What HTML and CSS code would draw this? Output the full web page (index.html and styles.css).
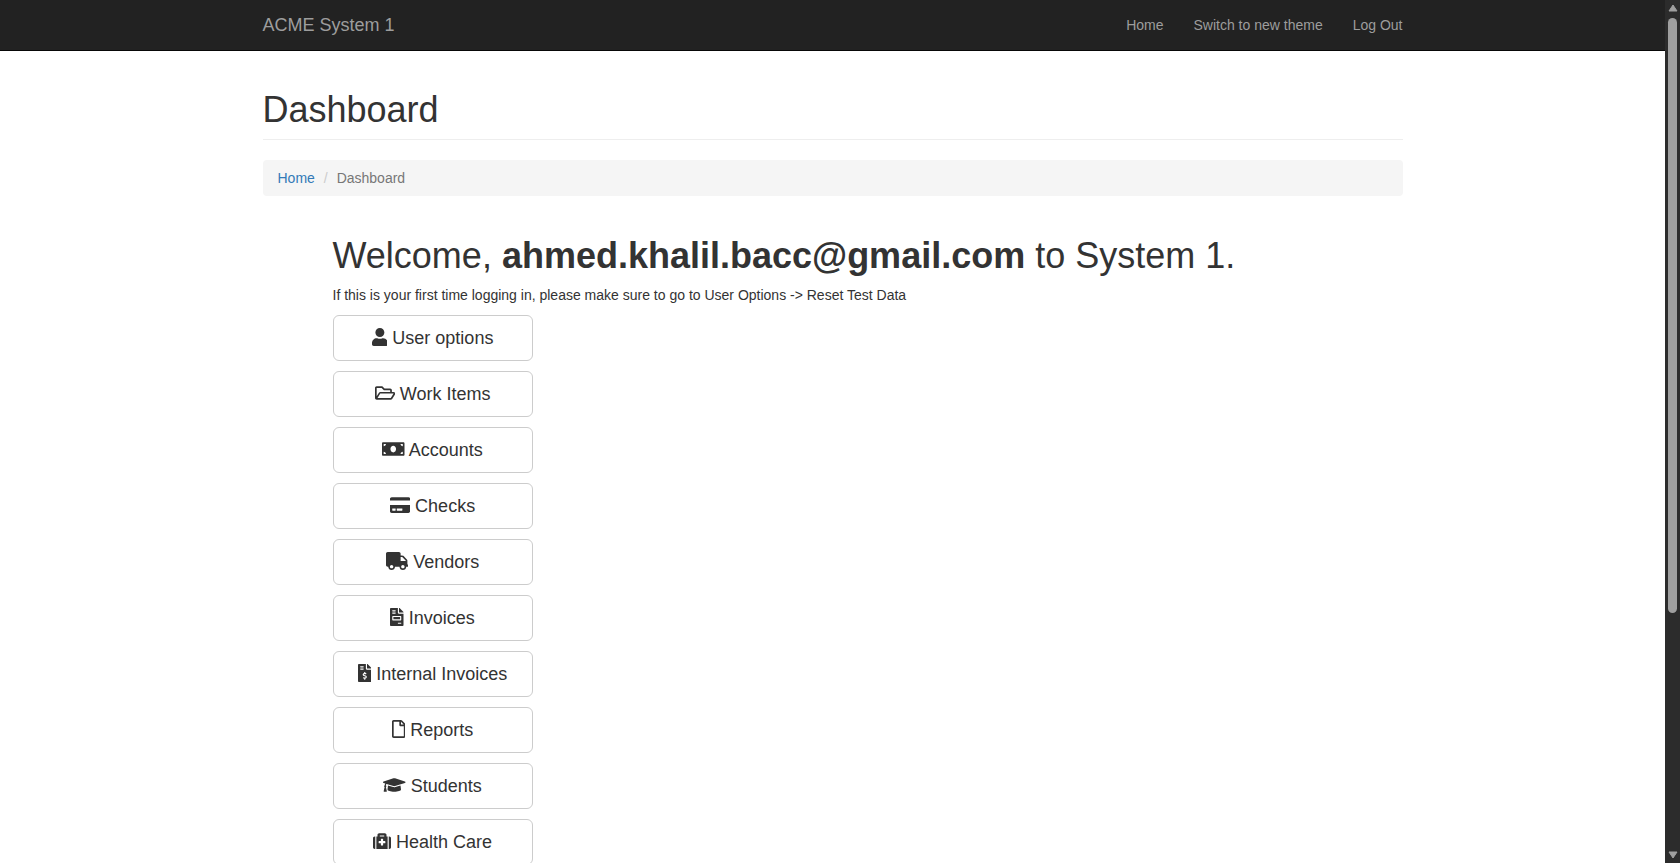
FILE: index.html
```html
<!DOCTYPE html>
<html lang="en">
<head>
<meta charset="utf-8">
<meta name="viewport" content="width=device-width, initial-scale=1">
<title>ACME System 1 - Dashboard</title>
<link rel="stylesheet" href="styles.css">
</head>
<body>
<div class="shell">
  <div class="page">
    <header class="navbar">
      <div class="container navbar-inner">
        <a class="brand" href="#">ACME System 1</a>
        <nav class="nav">
          <a href="#">Home</a>
          <a href="#">Switch to new theme</a>
          <a href="#">Log Out</a>
        </nav>
      </div>
    </header>
    <main class="container">
      <div class="page-header">
        <h1>Dashboard</h1>
      </div>
      <ol class="breadcrumb">
        <li><a href="#">Home</a></li>
        <li class="active">Dashboard</li>
      </ol>
      <section class="welcome">
        <h1>Welcome, <strong>ahmed.khalil.bacc@gmail.com</strong> to System 1.</h1>
        <p>If this is your first time logging in, please make sure to go to User Options -&gt; Reset Test Data</p>
        <div class="menu">
          <button type="button" class="btn"><svg class="icon" viewBox="0 0 448 512" aria-hidden="true"><path d="M224 256c70.700 0 128-57.300 128-128S294.700 0 224 0 96 57.300 96 128s57.300 128 128 128zm89.600 32h-16.700c-22.200 10.200-46.900 16-72.900 16s-50.600-5.800-72.900-16h-16.700C60.200 288 0 348.200 0 422.400V464c0 26.500 21.500 48 48 48h352c26.500 0 48-21.500 48-48v-41.600c0-74.200-60.200-134.400-134.400-134.400z"/></svg> User options</button>
          <button type="button" class="btn"><svg class="icon" viewBox="0 0 576 512" aria-hidden="true"><path d="M527.900 224H480v-48c0-26.500-21.500-48-48-48H272l-64-64H48C21.500 64 0 85.500 0 112v288c0 26.500 21.500 48 48 48h400c16.500 0 31.900-8.500 40.700-22.600l79.900-128c20-31.900-3-73.400-40.700-73.400zM48 118c0-3.300 2.700-6 6-6h134.100l64 64H426c3.300 0 6 2.700 6 6v42H152c-16.800 0-32.400 8.800-41.100 23.200L48 351.400zm400 282H72l77.200-128H528z"/></svg> Work Items</button>
          <button type="button" class="btn"><svg class="icon" viewBox="0 0 640 512" aria-hidden="true"><path d="M608 64H32C14.330 64 0 78.330 0 96v320c0 17.670 14.330 32 32 32h576c17.670 0 32-14.330 32-32V96c0-17.670-14.330-32-32-32zM48 400v-64c35.350 0 64 28.650 64 64H48zm0-224v-64h64c0 35.350-28.650 64-64 64zm272 176c-44.190 0-80-42.990-80-96 0-53.020 35.820-96 80-96s80 42.980 80 96c0 53.030-35.830 96-80 96zm272 48h-64c0-35.350 28.650-64 64-64v64zm0-224c-35.350 0-64-28.650-64-64h64v64z"/></svg> Accounts</button>
          <button type="button" class="btn"><svg class="icon" viewBox="0 0 576 512" aria-hidden="true"><path d="M0 432c0 26.500 21.500 48 48 48h480c26.500 0 48-21.500 48-48V256H0v176zm192-68c0-6.600 5.400-12 12-12h136c6.600 0 12 5.400 12 12v40c0 6.600-5.400 12-12 12H204c-6.600 0-12-5.400-12-12v-40zm-128 0c0-6.600 5.400-12 12-12h72c6.600 0 12 5.400 12 12v40c0 6.600-5.400 12-12 12H76c-6.600 0-12-5.400-12-12v-40zM576 80v48H0V80c0-26.500 21.500-48 48-48h480c26.500 0 48 21.500 48 48z"/></svg> Checks</button>
          <button type="button" class="btn"><svg class="icon" viewBox="0 0 640 512" aria-hidden="true"><path d="M624 352h-16V243.900c0-12.700-5.100-24.900-14.100-33.900L494 110.100c-9-9-21.200-14.100-33.900-14.100H416V48c0-26.500-21.500-48-48-48H48C21.500 0 0 21.500 0 48v320c0 26.500 21.500 48 48 48h16c0 53 43 96 96 96s96-43 96-96h128c0 53 43 96 96 96s96-43 96-96h48c8.800 0 16-7.200 16-16v-32c0-8.800-7.200-16-16-16zM160 464c-26.500 0-48-21.500-48-48s21.500-48 48-48 48 21.500 48 48-21.500 48-48 48zm320 0c-26.500 0-48-21.500-48-48s21.500-48 48-48 48 21.500 48 48-21.500 48-48 48zm80-208H416V144h44.100l99.900 99.900V256z"/></svg> Vendors</button>
          <button type="button" class="btn"><svg class="icon" viewBox="0 0 384 512" aria-hidden="true"><path d="M288 256H96v64h192v-64zm89-151L279.100 7c-4.500-4.500-10.600-7-17-7H256v128h128v-6.100c0-6.300-2.500-12.400-7-16.900zm-153 31V0H24C10.700 0 0 10.700 0 24v464c0 13.300 10.700 24 24 24h336c13.300 0 24-10.700 24-24V160H248c-13.200 0-24-10.800-24-24zM64 72c0-4.420 3.580-8 8-8h80c4.420 0 8 3.580 8 8v16c0 4.420-3.580 8-8 8H72c-4.420 0-8-3.580-8-8V72zm0 64c0-4.420 3.580-8 8-8h80c4.420 0 8 3.580 8 8v16c0 4.420-3.580 8-8 8H72c-4.420 0-8-3.580-8-8v-16zm256 304c0 4.420-3.580 8-8 8h-80c-4.420 0-8-3.580-8-8v-16c0-4.420 3.580-8 8-8h80c4.420 0 8 3.580 8 8v16zm0-200v96c0 8.840-7.160 16-16 16H80c-8.840 0-16-7.160-16-16v-96c0-8.840 7.160-16 16-16h224c8.840 0 16 7.160 16 16z"/></svg> Invoices</button>
          <button type="button" class="btn"><svg class="icon" viewBox="0 0 384 512" aria-hidden="true"><path d="M377 105L279.100 7c-4.500-4.500-10.600-7-17-7H256v128h128v-6.100c0-6.300-2.500-12.400-7-16.900zm-153 31V0H24C10.700 0 0 10.700 0 24v464c0 13.300 10.700 24 24 24h336c13.300 0 24-10.700 24-24V160H248c-13.200 0-24-10.800-24-24zM64 72c0-4.420 3.580-8 8-8h80c4.420 0 8 3.580 8 8v16c0 4.420-3.580 8-8 8H72c-4.420 0-8-3.580-8-8V72zm0 80v-16c0-4.420 3.580-8 8-8h80c4.420 0 8 3.580 8 8v16c0 4.420-3.580 8-8 8H72c-4.420 0-8-3.580-8-8zm144 263.880V440c0 4.420-3.580 8-8 8h-16c-4.420 0-8-3.580-8-8v-24.290c-11.290-.58-22.270-4.520-31.370-11.350-3.900-2.930-4.100-8.770-.57-12.140l11.750-11.210c2.770-2.640 6.890-2.760 10.130-.73 3.870 2.420 8.260 3.720 12.820 3.720h28.110c6.500 0 11.800-5.920 11.800-13.190 0-5.950-3.610-11.190-8.770-12.730l-45-13.500c-18.590-5.580-31.580-23.420-31.580-43.390 0-24.520 19.050-44.440 42.670-45.070V232c0-4.420 3.580-8 8-8h16c4.420 0 8 3.580 8 8v24.290c11.290.58 22.270 4.510 31.370 11.350 3.900 2.930 4.100 8.770.57 12.140l-11.750 11.210c-2.770 2.640-6.890 2.760-10.130.73-3.870-2.430-8.260-3.720-12.820-3.720h-28.110c-6.500 0-11.800 5.920-11.800 13.190 0 5.950 3.610 11.190 8.770 12.730l45 13.500c18.590 5.580 31.580 23.420 31.580 43.390 0 24.530-19.050 44.440-42.670 45.070z"/></svg> Internal Invoices</button>
          <button type="button" class="btn"><svg class="icon" viewBox="0 0 384 512" aria-hidden="true"><path d="M369.900 97.900L286 14C277 5 264.800-.1 252.100-.1H48C21.500 0 0 21.500 0 48v416c0 26.500 21.500 48 48 48h288c26.500 0 48-21.500 48-48V131.900c0-12.700-5.100-25-14.100-34zM332.100 128H256V51.900l76.100 76.100zM48 464V48h160v104c0 13.300 10.700 24 24 24h104v288H48z"/></svg> Reports</button>
          <button type="button" class="btn"><svg class="icon" viewBox="0 0 640 512" aria-hidden="true"><path d="M622.340 153.200L343.400 67.500c-15.200-4.670-31.600-4.670-46.790 0L17.660 153.200c-23.540 7.230-23.540 38.360 0 45.590l48.630 14.940c-10.670 13.190-17.230 29.280-17.880 46.900C38.780 266.150 32 276.110 32 288c0 10.780 5.680 19.850 13.860 25.650L20.330 428.530C18.110 438.520 25.710 448 35.940 448h56.110c10.240 0 17.840-9.480 15.620-19.470L82.140 313.650C90.320 307.850 96 298.780 96 288c0-11.570-6.470-21.250-15.660-26.870.76-15.020 8.440-28.300 20.690-36.720L296.600 284.500c9.060 2.780 26.440 6.250 46.790 0l278.950-85.700c23.550-7.240 23.550-38.360 0-45.600zM352.790 315.090c-28.530 8.760-52.840 3.920-65.590 0l-145.020-44.550L128 384c0 35.350 85.960 64 192 64s192-28.650 192-64l-14.180-113.470-145.030 44.560z"/></svg> Students</button>
          <button type="button" class="btn"><svg class="icon" viewBox="0 0 512 512" aria-hidden="true"><path d="M96 480h320V128h-32V80c0-26.510-21.490-48-48-48H176c-26.510 0-48 21.490-48 48v48H96v352zm96-384h128v32H192V96zm320 80v256c0 26.510-21.490 48-48 48h-16V128h16c26.510 0 48 21.490 48 48zM64 480H48c-26.510 0-48-21.490-48-48V176c0-26.510 21.490-48 48-48h16v352zm288-208v32c0 8.837-7.163 16-16 16h-48v48c0 8.837-7.163 16-16 16h-32c-8.837 0-16-7.163-16-16v-48h-48c-8.837 0-16-7.163-16-16v-32c0-8.837 7.163-16 16-16h48v-48c0-8.837 7.163-16 16-16h32c8.837 0 16 7.163 16 16v48h48c8.837 0 16 7.163 16 16z"/></svg> Health Care</button>
        </div>
      </section>
    </main>
  </div>
  <div class="scrollbar" aria-hidden="true">
    <svg class="arrow" viewBox="0 0 10 8"><path d="M5 1L9 7H1z"/></svg>
    <div class="track"><div class="thumb"></div></div>
    <svg class="arrow" viewBox="0 0 10 8"><path d="M5 7L9 1H1z"/></svg>
  </div>
</div>
</body>
</html>
```

FILE: styles.css
```css
* {
  box-sizing: border-box;
}

body {
  margin: 0;
  background: #fff;
  color: #333;
  font-family: "Helvetica Neue", Helvetica, Arial, "Liberation Sans", sans-serif;
  font-size: 14px;
  line-height: 20px;
}

a {
  color: #337ab7;
  text-decoration: none;
}

.shell {
  display: flex;
  height: 100vh;
  overflow: hidden;
}

.page {
  flex: 1;
  min-width: 0;
}

.container {
  max-width: 1170px;
  margin: 0 auto;
  padding: 0 15px;
}

.navbar {
  background: #222;
  border-bottom: 1px solid #080808;
}

.navbar-inner {
  display: flex;
  justify-content: space-between;
  align-items: center;
  min-height: 50px;
}

.navbar a {
  color: #9d9d9d;
}

.brand {
  font-size: 18px;
}

.nav {
  display: flex;
  gap: 30px;
}

h1 {
  margin: 0;
  font-size: 36px;
  font-weight: 500;
  line-height: 40px;
}

.page-header {
  margin: 39px 0 20px;
  padding-bottom: 9px;
  border-bottom: 1px solid #eee;
}

.breadcrumb {
  display: flex;
  margin: 0 0 20px;
  padding: 8px 15px;
  border-radius: 4px;
  background: #f5f5f5;
  list-style: none;
}

.breadcrumb .active {
  color: #777;
}

.breadcrumb li + li::before {
  content: "/\00a0";
  padding: 0 5px 0 9px;
  color: #ccc;
}

.welcome {
  padding: 20px 70px;
}

.welcome p {
  margin: 9px 0 10px;
}

.menu {
  display: flex;
  flex-direction: column;
  align-items: flex-start;
  gap: 10px;
}

.btn {
  width: 200px;
  padding: 10px 16px;
  border: 1px solid #ccc;
  border-radius: 6px;
  background: #fff;
  color: #333;
  font-family: inherit;
  font-size: 18px;
  line-height: 24px;
  white-space: nowrap;
  cursor: pointer;
}

.icon {
  height: 18px;
  vertical-align: -2px;
  fill: currentColor;
}

.scrollbar {
  display: flex;
  flex-direction: column;
  align-items: center;
  width: 15px;
  padding: 4px 0;
  background: #2c2c2c;
}

.arrow {
  width: 10px;
  height: 8px;
  fill: #9f9f9f;
  stroke: #9f9f9f;
  stroke-linejoin: round;
}

.track {
  flex: 1;
  width: 9px;
  padding: 6px 0;
}

.thumb {
  height: 72%;
  border-radius: 5px;
  background: #9f9f9f;
}
```
